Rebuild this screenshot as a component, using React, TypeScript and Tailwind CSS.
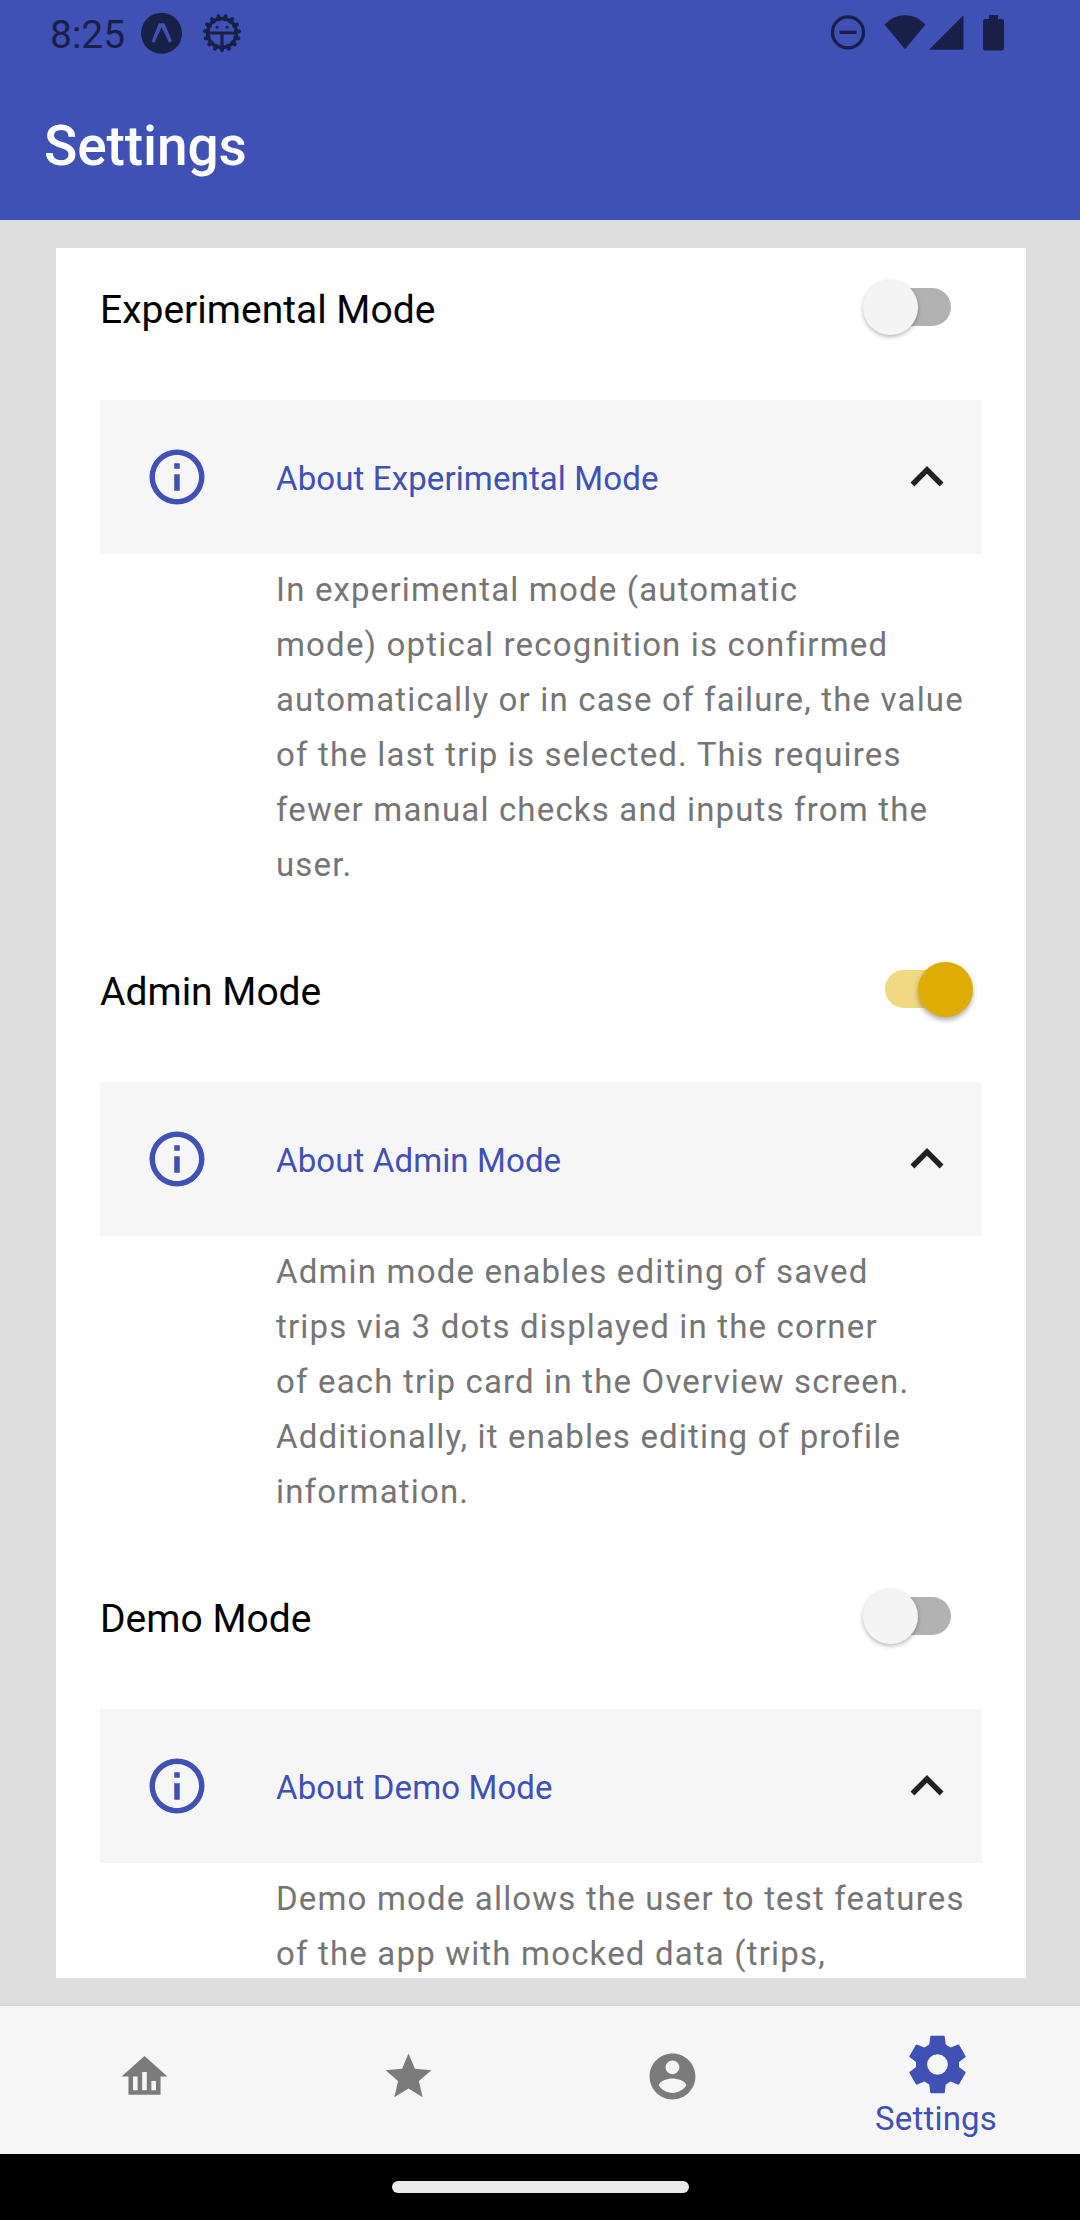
import React from 'react';

const sections = [
  {
    title: 'Experimental Mode',
    on: false,
    lines: [
      'In experimental mode (automatic',
      'mode) optical recognition is confirmed',
      'automatically or in case of failure, the value',
      'of the last trip is selected. This requires',
      'fewer manual checks and inputs from the',
      'user.',
    ],
  },
  {
    title: 'Admin Mode',
    on: true,
    lines: [
      'Admin mode enables editing of saved',
      'trips via 3 dots displayed in the corner',
      'of each trip card in the Overview screen.',
      'Additionally, it enables editing of profile',
      'information.',
    ],
  },
  {
    title: 'Demo Mode',
    on: false,
    lines: [
      'Demo mode allows the user to test features',
      'of the app with mocked data (trips,',
    ],
  },
];

function Icon({ d, className }: { d: string; className: string }) {
  return (
    <svg viewBox="0 0 24 24" className={className} fill="currentColor" fillRule="evenodd">
      <path d={d} />
    </svg>
  );
}

const INFO =
  'M11,9H13V7H11M12,20C7.59,20 4,16.41 4,12C4,7.59 7.59,4 12,4C16.41,4 20,7.59 20,12C20,16.41 16.41,20 12,20M12,2A10,10 0 0,0 2,12A10,10 0 0,0 12,22A10,10 0 0,0 22,12A10,10 0 0,0 12,2M11,17H13V11H11V17Z';
const CHEVRON_UP = 'M7.41,15.41L12,10.83L16.59,15.41L18,14L12,8L6,14L7.41,15.41Z';
const HOME =
  'M12,3L2,12H5V20H19V12H22L12,3M9,18H7V12H9V18M13,18H11V10H13V18M17,18H15V14H17V18Z';
const STAR =
  'M12,17.27L18.18,21L16.54,13.97L22,9.24L14.81,8.62L12,2L9.19,8.62L2,9.24L7.45,13.97L5.82,21L12,17.27Z';
const ACCOUNT =
  'M12 2C6.48 2 2 6.48 2 12s4.48 10 10 10 10-4.48 10-10S17.52 2 12 2zm0 3c1.66 0 3 1.34 3 3s-1.34 3-3 3-3-1.34-3-3 1.34-3 3-3zm0 14.2c-2.5 0-4.71-1.28-6-3.22.03-1.99 4-3.08 6-3.08 1.99 0 5.97 1.09 6 3.08-1.29 1.94-3.5 3.22-6 3.22z';
const COG =
  'M9.75 2H14.25L14.5 2.2L14.87 5.07L16.56 6.05L19.2 5L19.5 5.1L21.8 9.1L21.75 9.4L19.48 11.1V12.9L21.75 14.6L21.8 14.9L19.5 18.9L19.2 19L16.56 17.95L14.87 18.93L14.5 21.8L14.25 22H9.75L9.5 21.8L9.13 18.93L7.44 17.95L4.8 19L4.5 18.9L2.2 14.9L2.25 14.6L4.52 12.9V11.1L2.25 9.4L2.2 9.1L4.5 5.1L4.8 5L7.44 6.05L9.13 5.07L9.5 2.2ZM12 15.6A3.6 3.6 0 1 0 12 8.4A3.6 3.6 0 1 0 12 15.6Z';

const TEETH = Array.from({ length: 15 }, (_, i) => i * 24 + 12);

function StatusBar() {
  return (
    <div className="flex h-[66px] items-start pl-[50px] pr-[76px] pt-[12px] text-[#182048]">
      <span className="w-[91px] whitespace-nowrap text-[39px] leading-[46px]">8:25</span>
      <svg viewBox="0 0 42 42" className="h-[42px] w-[42px]">
        <circle cx="20.5" cy="21.3" r="20.5" fill="currentColor" />
        <path d="M10.6 29.6L17.8 11.3H23.4L31 28.8L28 31L20.6 15.5L13.6 31Z" fill="#3f51b5" />
        <path d="M20.6 15.5L28 31.2H13.4Z" fill="currentColor" />
      </svg>
      <svg viewBox="-21 -21 42 42" className="ml-[18px] h-[42px] w-[42px]" fill="none" stroke="currentColor">
        <circle r="14.5" strokeWidth="3.4" />
        {TEETH.map((a) => (
          <path key={a} d="M0 -14V-17.2" strokeWidth="4" strokeLinecap="round" transform={`rotate(${a})`} />
        ))}
        <path d="M-14 0H14M0 0V14" strokeWidth="3.2" />
        <circle cx="-5" cy="-5.8" r="1.5" fill="currentColor" stroke="none" />
        <circle cx="5" cy="-5.8" r="1.5" fill="currentColor" stroke="none" />
      </svg>
      <div className="ml-auto flex items-start">
        <svg viewBox="0 0 36 42" className="h-[42px] w-[36px]" fill="none" stroke="currentColor">
          <circle cx="18" cy="20.4" r="15.5" strokeWidth="3.3" />
          <path d="M9.5 20.4H26.5" strokeWidth="3.4" />
        </svg>
        <svg viewBox="0 0 42 42" className="ml-[18px] h-[42px] w-[42px]" fill="currentColor">
          <path d="M0.5 12.5Q9.5 3.2 21 3.2T41.5 12.5L21 37.3Z" />
        </svg>
        <svg viewBox="0 0 35 42" className="ml-[3px] h-[42px] w-[35px]" fill="currentColor">
          <path d="M34.5 3.3V37.8H0Z" />
        </svg>
        <svg viewBox="0 0 21 42" className="ml-[19px] h-[42px] w-[21px]" fill="currentColor">
          <path d="M6 3H15V7H19Q21 7 21 9V36.5Q21 38.5 19 38.5H2Q0 38.5 0 36.5V9Q0 7 2 7H6Z" />
        </svg>
      </div>
    </div>
  );
}

function Toggle({ on }: { on: boolean }) {
  return on ? (
    <div className="mr-[9px] flex h-[38px] w-[88px] items-center justify-end rounded-full bg-[linear-gradient(to_right,#f0d781_70px,transparent_70px)]">
      <div className="h-[55px] w-[55px] shrink-0 rounded-full bg-[#dfac06] shadow-[0_3px_5px_rgba(0,0,0,0.32)]" />
    </div>
  ) : (
    <div className="mr-[31px] flex h-[38px] w-[88px] items-center rounded-full bg-[linear-gradient(to_left,#b2b2b2_70px,transparent_70px)]">
      <div className="h-[55px] w-[55px] shrink-0 rounded-full bg-[#f4f4f4] shadow-[0_2px_4px_rgba(0,0,0,0.28)]" />
    </div>
  );
}

function Section({ title, on, lines }: { title: string; on: boolean; lines: string[] }) {
  return (
    <section className="mb-[38px] shrink-0">
      <div className="flex h-[118px] items-center justify-between">
        <h2 className="mt-[5px] text-[39px] leading-[52px] text-black">{title}</h2>
        <Toggle on={on} />
      </div>
      <div className="mt-[34px] flex h-[154px] items-center bg-[#f6f6f6] pl-[44px] pr-[22px]">
        <Icon d={INFO} className="h-[66px] w-[66px] text-[#3f51b5]" />
        <span className="ml-[66px] mt-[3px] flex-1 text-[33px] leading-[44px] tracking-[0.12px] text-[#3f51b5]">
          About {title}
        </span>
        <Icon d={CHEVRON_UP} className="h-[66px] w-[66px] text-[#212121]" />
      </div>
      <p className="pl-[176px] pt-[8px] text-[33px] leading-[55px] tracking-[1.17px] text-[#757575]">
        {lines.map((line) => (
          <span key={line} className="block whitespace-nowrap">
            {line}
          </span>
        ))}
      </p>
    </section>
  );
}

export default function App() {
  return (
    <div className="flex h-[2220px] w-[1080px] flex-col overflow-hidden bg-[#dedede] font-[Roboto,sans-serif]">
      <header className="h-[220px] shrink-0 bg-[#3f51b5]">
        <StatusBar />
        <h1 className="pl-[44px] pt-[43px] text-[55px] font-medium leading-[74px] tracking-[-0.1px] text-white">Settings</h1>
      </header>
      <main className="my-[28px] ml-[56px] flex h-[1730px] w-[970px] shrink-0 flex-col overflow-hidden bg-white px-[44px]">
        {sections.map((s) => (
          <Section key={s.title} {...s} />
        ))}
      </main>
      <nav className="flex h-[148px] shrink-0 items-center bg-[#f6f6f6] px-[12px] shadow-[0_-1px_3px_rgba(0,0,0,0.08)]">
        <div className="flex flex-1 justify-center pb-[7px]">
          <Icon d={HOME} className="h-[55px] w-[55px] text-[#7b7b7b]" />
        </div>
        <div className="flex flex-1 justify-center pb-[7px]">
          <Icon d={STAR} className="h-[55px] w-[55px] text-[#7b7b7b]" />
        </div>
        <div className="flex flex-1 justify-center pb-[7px]">
          <Icon d={ACCOUNT} className="h-[55px] w-[55px] text-[#7b7b7b]" />
        </div>
        <div className="flex flex-1 flex-col items-center pt-[9px] text-[#3f51b5]">
          <Icon d={COG} className="ml-[2px] h-[69px] w-[69px]" />
          <span className="text-[33px] leading-[40px] tracking-[0.2px]">Settings</span>
        </div>
      </nav>
      <footer className="flex h-[66px] shrink-0 items-center justify-center bg-black">
        <div className="h-[12px] w-[297px] rounded-full bg-[#ebebeb]" />
      </footer>
    </div>
  );
}
